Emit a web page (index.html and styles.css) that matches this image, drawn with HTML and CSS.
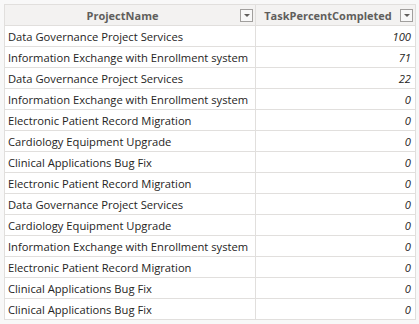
FILE: index.html
```html
<!DOCTYPE html>
<html>
<head>
<meta charset="utf-8">
<link rel="stylesheet" href="styles.css">
</head>
<body>
<div class="frame">
  <div class="table">
    <div class="row head">
      <div class="cell name"><span class="label">ProjectName</span><span class="filter"></span></div>
      <div class="cell pct"><span class="label">TaskPercentCompleted</span><span class="filter"></span></div>
    </div>
    <div class="row"><div class="cell name">Data Governance Project Services</div><div class="cell pct num">100</div></div>
    <div class="row"><div class="cell name">Information Exchange with Enrollment system</div><div class="cell pct num">71</div></div>
    <div class="row"><div class="cell name">Data Governance Project Services</div><div class="cell pct num">22</div></div>
    <div class="row"><div class="cell name">Information Exchange with Enrollment system</div><div class="cell pct num">0</div></div>
    <div class="row"><div class="cell name">Electronic Patient Record Migration</div><div class="cell pct num">0</div></div>
    <div class="row"><div class="cell name">Cardiology Equipment Upgrade</div><div class="cell pct num">0</div></div>
    <div class="row"><div class="cell name">Clinical Applications Bug Fix</div><div class="cell pct num">0</div></div>
    <div class="row"><div class="cell name">Electronic Patient Record Migration</div><div class="cell pct num">0</div></div>
    <div class="row"><div class="cell name">Data Governance Project Services</div><div class="cell pct num">0</div></div>
    <div class="row"><div class="cell name">Cardiology Equipment Upgrade</div><div class="cell pct num">0</div></div>
    <div class="row"><div class="cell name">Information Exchange with Enrollment system</div><div class="cell pct num">0</div></div>
    <div class="row"><div class="cell name">Electronic Patient Record Migration</div><div class="cell pct num">0</div></div>
    <div class="row"><div class="cell name">Clinical Applications Bug Fix</div><div class="cell pct num">0</div></div>
    <div class="row"><div class="cell name">Clinical Applications Bug Fix</div><div class="cell pct num">0</div></div>
  </div>
</div>
</body>
</html>
```
FILE: styles.css
```css
html, body {
  margin: 0;
  padding: 0;
  background: #f8f8f8;
}
body {
  font-family: "Open Sans", "Noto Sans", sans-serif;
  font-size: 11.2px;
  color: #252423;
  width: 419px;
  height: 324px;
  overflow: hidden;
}
.frame {
  padding: 4px 0 0 4px;
}
.table {
  width: 411px;
  border-top: 1px solid #e1dfdd;
  border-left: 1px solid #e1dfdd;
  background: #ffffff;
}
.row {
  display: flex;
  box-sizing: border-box;
  height: 21px;
  border-bottom: 1px solid #e1dfdd;
}
.cell {
  display: flex;
  align-items: center;
  box-sizing: border-box;
  border-right: 1px solid #e1dfdd;
  white-space: nowrap;
  overflow: hidden;
}
.name {
  width: 251px;
  padding-left: 3px;
}
.pct {
  width: 160px;
  padding-right: 4px;
}
.num {
  justify-content: flex-end;
  font-style: italic;
}
.head {
  background: #f3f2f1;
}
.head .cell {
  padding: 0 2px 0 0;
}
.head .label {
  flex: 1;
  text-align: center;
  font-weight: bold;
  font-size: 11px;
  color: #605e5c;
}
.filter {
  width: 13px;
  height: 13px;
  box-sizing: border-box;
  border: 1px solid #a19f9d;
  background: #f8f8f8;
  display: flex;
  align-items: center;
  justify-content: center;
}
.filter::after {
  content: "";
  width: 0;
  height: 0;
  border-left: 3px solid transparent;
  border-right: 3px solid transparent;
  border-top: 3px solid #605e5c;
}
```
